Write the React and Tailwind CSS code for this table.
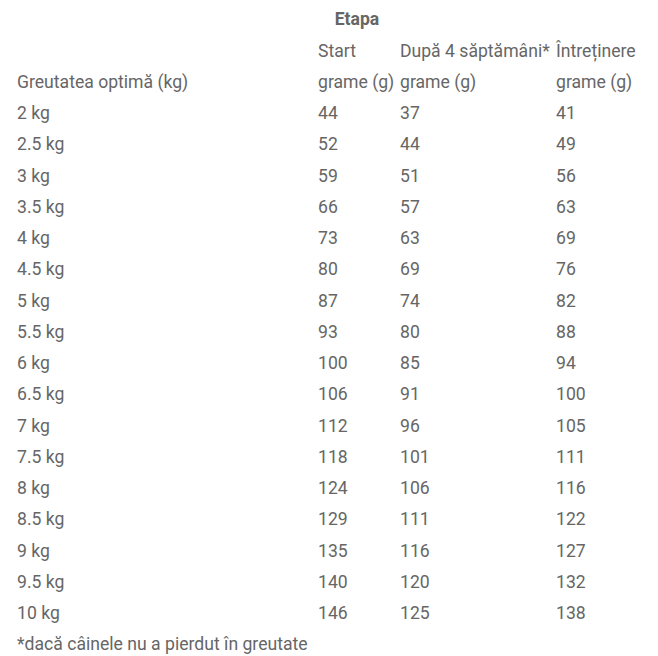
import React from 'react'

const rows = [
  ['2 kg', '44', '37', '41'],
  ['2.5 kg', '52', '44', '49'],
  ['3 kg', '59', '51', '56'],
  ['3.5 kg', '66', '57', '63'],
  ['4 kg', '73', '63', '69'],
  ['4.5 kg', '80', '69', '76'],
  ['5 kg', '87', '74', '82'],
  ['5.5 kg', '93', '80', '88'],
  ['6 kg', '100', '85', '94'],
  ['6.5 kg', '106', '91', '100'],
  ['7 kg', '112', '96', '105'],
  ['7.5 kg', '118', '101', '111'],
  ['8 kg', '124', '106', '116'],
  ['8.5 kg', '129', '111', '122'],
  ['9 kg', '135', '116', '127'],
  ['9.5 kg', '140', '120', '132'],
  ['10 kg', '146', '125', '138'],
]

const Row = ({ a, b, c, d, bold }) => (
  <div className="flex h-[31.25px] items-center whitespace-nowrap">
    <div className="w-[301px]">{a}</div>
    <div className={'w-[82px] ' + (bold ? 'font-bold text-center pr-[4px]' : '')}>{b}</div>
    <div className="w-[156px]">{c}</div>
    <div>{d}</div>
  </div>
)

export default function App() {
  return (
    <div
      className="bg-white text-[#666666] text-[17.6px] pl-[17px] pt-[4px]"
      style={{ fontFamily: 'Roboto, "Noto Sans", sans-serif' }}
    >
      <Row a="" b="Etapa" c="" d="" bold />
      <Row a="" b="Start" c="După 4 săptămâni*" d="Întreținere" />
      <Row a="Greutatea optimă (kg)" b="grame (g)" c="grame (g)" d="grame (g)" />
      {rows.map((r) => (
        <Row key={r[0]} a={r[0]} b={r[1]} c={r[2]} d={r[3]} />
      ))}
      <div className="flex h-[31.25px] items-center">*dacă câinele nu a pierdut în greutate</div>
    </div>
  )
}
